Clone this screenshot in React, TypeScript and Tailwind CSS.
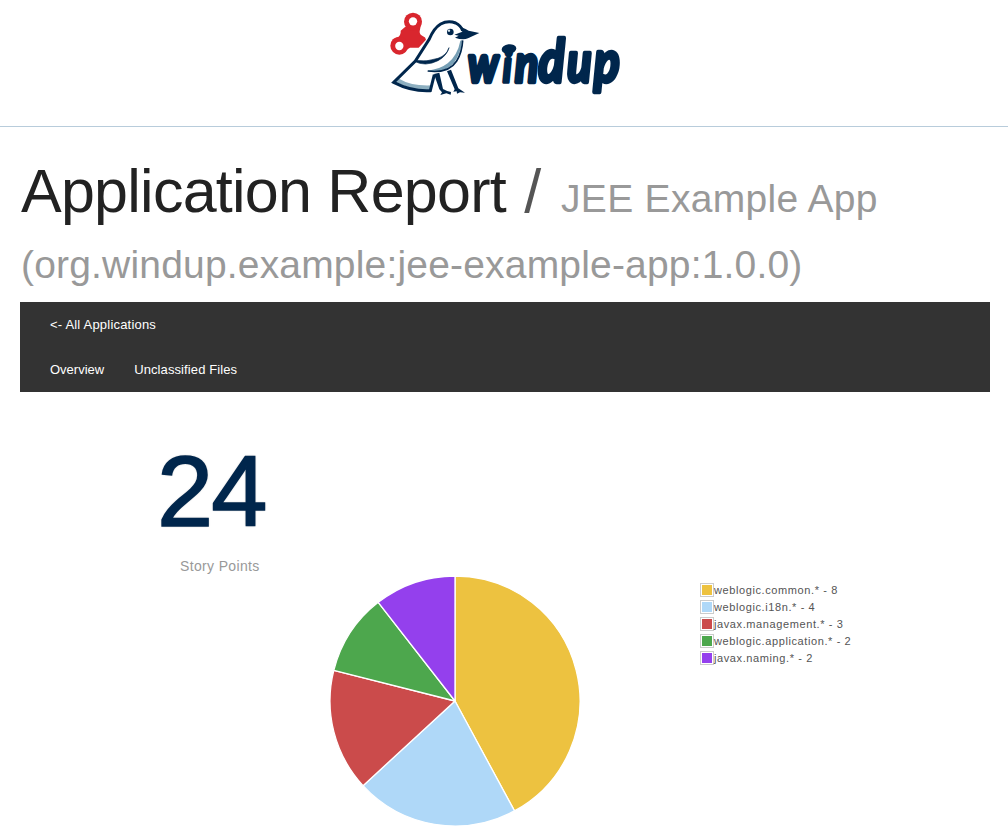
const slices = [
  { name: "weblogic.common.*", value: 8, color: "#edc240" },
  { name: "weblogic.i18n.*", value: 4, color: "#afd8f8" },
  { name: "javax.management.*", value: 3, color: "#cb4b4b" },
  { name: "weblogic.application.*", value: 2, color: "#4da74d" },
  { name: "javax.naming.*", value: 2, color: "#9440ed" },
];

function Logo() {
  return (
    <svg width="250" height="110" viewBox="0 0 750 330" className="block" aria-label="windup">
      <g fill="#d9262e">
        <path d="M76 80L62 92Q63 104 55 111L40 117L72 158Q79 147 90 143L116 143L138 119Q137 111 129 109Q118 104 119 94Q121 83 124 70Z" />
        <circle cx="99" cy="65" r="27" />
        <circle cx="58" cy="137" r="27" />
      </g>
      <circle cx="99" cy="64" r="12.5" fill="#fff" />
      <circle cx="58" cy="138" r="12.5" fill="#fff" />
      <path d="M106 185L148 117Q162 84 182 72Q204 60 227 69Q242 76 248 91L247 125Q245 163 222 190Q202 214 165 216L151 272Q95 276 41 247L106 185Z" fill="#fff" />
      <path d="M246 121Q243 160 222 188Q197 219 143 212Q180 208 203 190Q233 165 241 122Z" fill="#769fb5" />
      <path d="M47 246Q95 271 151 269L155 256Q95 259 57 236Z" fill="#8dafc0" />
      <path d="M248 92Q242 76 227 69Q204 60 182 72Q162 84 148 117L106 183L41 247Q95 275 151 272L163 224" fill="none" stroke="#00264c" strokeWidth="9" strokeLinejoin="miter" />
      <path d="M248 121Q246 157 230 183Q206 221 143 213" fill="none" stroke="#00264c" strokeWidth="5" />
      <path d="M103 184Q136 201 174 182Q200 168 207 143Q201 165 174 175Q139 187 109 181Z" fill="#00264c" stroke="#00264c" strokeWidth="2" />
      <path d="M223 104L247 95L240 80Q257 86 266 92L298 99L264 115Q249 122 225 113L236 107Z" fill="#00264c" />
      <circle cx="211" cy="96" r="10" fill="#00264c" />
      <circle cx="207" cy="92" r="3.5" fill="#d7e6ed" />
      <path d="M162 222L178 218L189 267Q202 274 213 276L212 284L199 280L181 285L186 277L178 268Z" fill="#00264c" />
      <path d="M201 214L213 209L235 265L255 278L240 277L231 281L230 274L220 275L224 268Z" fill="#00264c" />
      <g
        fill="#00264c"
        stroke="#00264c"
        strokeWidth="13"
        strokeLinejoin="round"
        transform="translate(0 245) scale(0.82 1)"
        fontFamily="Lato, sans-serif"
        fontStyle="italic"
        fontWeight="700"
        fontSize="157"
      >
        <text y="0">
          <tspan x="322" fontSize="150">w</tspan>
          <tspan x="449" fontSize="134" strokeWidth="11">i</tspan>
          <tspan x="494">n</tspan>
          <tspan x="580" fontSize="176">d</tspan>
          <tspan x="685" fontSize="164">u</tspan>
          <tspan x="783" fontSize="174">p</tspan>
        </text>
      </g>
      <ellipse cx="387" cy="147" rx="22" ry="14" fill="#00264c" transform="rotate(-7 387 147)" />
    </svg>
  );
}

function PieChart() {
  const total = slices.reduce((sum, s) => sum + s.value, 0);
  const point = (fraction: number) => {
    const angle = fraction * Math.PI * 2 - Math.PI / 2;
    return `${125 + 125 * Math.cos(angle)} ${125 + 125 * Math.sin(angle)}`;
  };
  let start = 0;
  return (
    <svg width="252" height="252" viewBox="-1 -1 252 252" className="block shrink-0">
      {slices.map((s) => {
        const from = start / total;
        start += s.value;
        return (
          <path
            key={s.name}
            d={`M125 125L${point(from)}A125 125 0 0 1 ${point(start / total)}Z`}
            fill={s.color}
            stroke="#fff"
            strokeWidth="1.3"
            strokeLinejoin="round"
          />
        );
      })}
    </svg>
  );
}

export default function App() {
  return (
    <div className="h-[837px] w-full overflow-hidden bg-white font-['Liberation_Sans',sans-serif] text-[#222]">
      <header className="h-[127px] border-b border-[#b8ccdb] pl-[380px]">
        <Logo />
      </header>
      <main className="pr-[18px] pl-5">
        <h1 className="pt-[31px] pl-px leading-[66px] whitespace-nowrap">
          <span className="block h-[66px]">
            <span className="text-[61px] tracking-[-0.75px]">Application Report </span>
            <span className="ml-[2px] text-[61px] text-[#555]">/ </span>
            <span className="ml-[3px] text-[39px] tracking-[0.3px] text-[#999]">JEE Example App</span>
          </span>
          <span className="block h-[78px] pt-[8px] text-[39px] tracking-[0.18px] text-[#999]">
            (org.windup.example:jee-example-app:1.0.0)
          </span>
        </h1>
        <nav className="flex h-[90px] flex-col bg-[#333] pl-[30px] text-[13px] leading-[45px] text-white">
          <a className="tracking-[0.2px]">&lt;- All Applications</a>
          <div className="flex gap-[30px]">
            <a>Overview</a>
            <a className="tracking-[0.1px]">Unclassified Files</a>
          </div>
        </nav>
        <section className="flex">
          <div className="flex w-[309px] flex-col pt-[46px]">
            <div className="h-[110px] pl-[137px] text-[101px] leading-[106px] tracking-[-2px] text-[#00264c] [-webkit-text-stroke:1.5px_#00264c] [text-shadow:0_0_2px_#777]">24</div>
            <div className="pl-[160px] text-[14px] leading-[36px] tracking-[0.35px] text-[#999]">Story Points</div>
          </div>
          <div className="pt-[183px]">
            <PieChart />
          </div>
          <ul className="pt-[190px] pl-[119px] text-[11px] leading-[17px] text-[#545454]">
            {slices.map((s) => (
              <li key={s.name} className="flex h-[17px] items-start whitespace-nowrap">
                <span className="mt-px border border-[#ccc] p-px">
                  <span className="block h-[10px] w-[10px]" style={{ backgroundColor: s.color }} />
                </span>
                <span className="tracking-[0.6px]">{s.name} - {s.value}</span>
              </li>
            ))}
          </ul>
        </section>
      </main>
    </div>
  );
}
